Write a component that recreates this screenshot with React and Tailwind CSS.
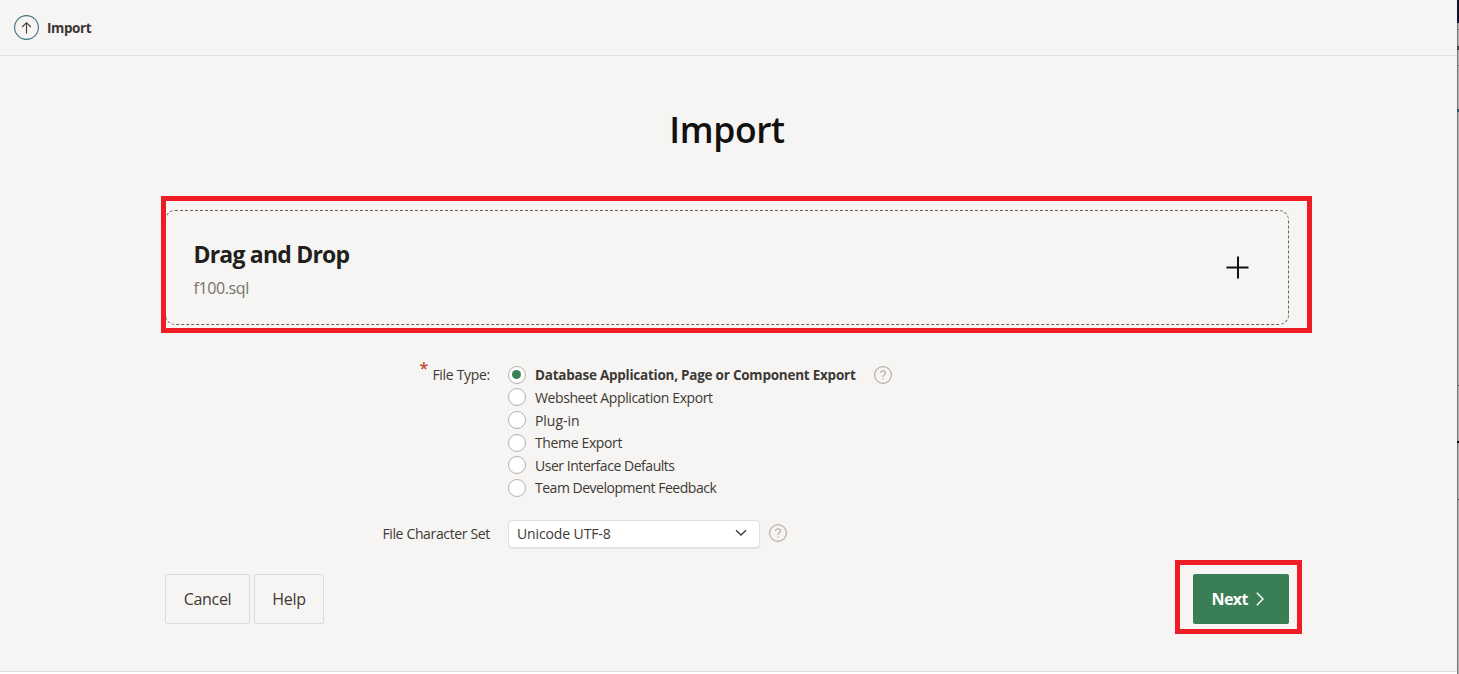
const fileTypes = [
  { label: 'Database Application, Page or Component Export', style: 'text-[13.5px] font-bold tracking-[-0.24px]' },
  { label: 'Websheet Application Export', style: 'tracking-[-0.4px]' },
  { label: 'Plug-in', style: 'tracking-[-0.05px]' },
  { label: 'Theme Export', style: 'tracking-[-0.36px]' },
  { label: 'User Interface Defaults', style: 'tracking-[-0.46px]' },
  { label: 'Team Development Feedback', style: 'tracking-[-0.48px]' },
];

function HelpIcon() {
  return (
    <svg className="size-[18px] shrink-0" viewBox="0 0 18 18" fill="none" stroke="#b3afac">
      <circle cx="9" cy="9" r="8.4" strokeWidth="1.2" />
      <path d="M6.5 7.1C6.5 5.6 7.5 4.8 9 4.8s2.5.9 2.5 2.2c0 1.7-2.4 1.7-2.4 3.6v.5M9.1 12.3v1.3" strokeWidth="1.2" />
    </svg>
  );
}

function Header() {
  return (
    <header className="flex h-14 shrink-0 items-center border-b border-[#e2e1df] pl-3.5">
      <svg className="size-[25px]" viewBox="0 0 25 25" fill="none">
        <circle cx="12.5" cy="12.5" r="11.9" stroke="#3c7480" strokeWidth="1.1" />
        <path d="M12.5 18.5V8M8.2 12l4.3-4.3 4.3 4.3" stroke="#3f3b38" strokeWidth="1.1" />
      </svg>
      <span className="ml-2 text-[13.5px] leading-5 font-bold tracking-[-0.4px] text-[#3a3633]">Import</span>
    </header>
  );
}

function EdgeStrip() {
  return (
    <div className="flex w-0.5 shrink-0 flex-col border-l border-[#777] bg-[#b4b4b4]">
      <div className="-ml-px h-[23px] bg-[#10122a]" />
      <div className="mt-1.5 h-px bg-[#777]" />
      <div className="-ml-px mt-4 h-1 bg-[#444]" />
      <div className="mt-[15px] h-px bg-[#777]" />
      <div className="-ml-px mt-[43px] h-[3px] bg-[#35525c]" />
      <div className="mt-[273px] h-px bg-[#444]" />
      <div className="-ml-px mt-[55px] h-0.5 bg-black" />
      <div className="mt-14 h-px bg-[#444]" />
    </div>
  );
}

export default function App() {
  return (
    <div className="flex h-[674px] w-[1459px] overflow-hidden bg-white font-['Open_Sans','Noto_Sans',sans-serif] text-[#3d3935]">
      <div className="flex flex-1 flex-col bg-white">
        <div className="flex h-[672px] flex-col border-b border-[#dfdedc] bg-[#f6f5f3]">
          <Header />
          <main className="flex flex-col pr-[168px] pl-[165px]">
            <h1 className="mt-12 h-[50px] text-center text-[35.5px] leading-[50px] font-semibold tracking-[-0.4px] text-[#121110]">
              Import
            </h1>
            <section className="relative mt-14 flex h-[115px] items-center justify-between rounded-[10px] border border-dashed border-[#66625f] pr-[39px] pl-[27.5px]">
              <div className="pt-1">
                <h2 className="text-[23px] leading-8 font-bold tracking-[-0.8px] text-[#211f1c]">Drag and Drop</h2>
                <p className="mt-[5px] text-[16px] leading-[26px] tracking-[-0.4px] text-[#76716d]">f100.sql</p>
              </div>
              <svg className="size-[23px]" viewBox="0 0 23 23" stroke="#121110" strokeWidth="2">
                <path d="M.5 11.5h22M12 .5v22" />
              </svg>
              <div className="pointer-events-none absolute -top-[15px] -left-[5px] h-[137px] w-[1151px] border-[5px] border-[#ee1c25]" />
            </section>
            <form className="mt-[38.6px] text-[14px]">
              <div className="flex">
                <div className="relative w-[325px] text-right leading-[22px] tracking-[-0.3px]">
                  <span className="absolute -top-[7px] right-[62px] text-[16px] font-semibold text-[#c74634]">*</span>
                  File Type:
                </div>
                <div className="ml-[18px] flex flex-col">
                  {fileTypes.map(({ label, style }, i) => (
                    <label key={label} className="flex h-[22.6px] items-center whitespace-nowrap">
                      <span className="flex size-[18px] shrink-0 items-center rounded-full border border-[#b5b1ae] bg-white pl-[3px]">
                        {i === 0 && <span className="mb-px size-[9px] rounded-full bg-[#3a7e55]" />}
                      </span>
                      <span className={`ml-[9px] ${style}`}>{label}</span>
                      {i === 0 && <span className="ml-[18px]"><HelpIcon /></span>}
                    </label>
                  ))}
                </div>
              </div>
              <div className="mt-[20.4px] flex h-7 items-center">
                <span className="w-[325px] text-right tracking-[-0.35px]">File Character Set</span>
                <div className="ml-[18px] flex h-7 w-[252px] items-center justify-between rounded-sm border border-[#e2e0de] bg-white pr-3 pl-2 shadow-[0_1px_1px_rgba(0,0,0,0.07)]">
                  <span className="tracking-[-0.12px]">Unicode UTF-8</span>
                  <svg className="mb-0.5 h-2 w-3" viewBox="0 0 12 8" fill="none" stroke="#3d3935" strokeWidth="1.3">
                    <path d="m1 1.2 5 4.8 5-4.8" />
                  </svg>
                </div>
                <span className="mb-0.5 ml-[9px]"><HelpIcon /></span>
              </div>
            </form>
            <div className="mt-[26px] flex justify-between text-[16px]">
              <div className="flex gap-1">
                <button className="h-[50px] w-[85px] rounded-[2px] border border-[#dddbd9] tracking-[-0.3px]">Cancel</button>
                <button className="h-[50px] w-[70px] rounded-[2px] border border-[#dddbd9] tracking-[-0.3px]">Help</button>
              </div>
              <div className="relative">
                <button className="flex h-[50px] w-24 items-center rounded-[2px] bg-[#3a7e55] pl-[18.5px] font-bold tracking-[-0.55px] text-white">
                  Next
                  <svg className="ml-2 h-3.5 w-2" viewBox="0 0 8 14" fill="none" stroke="currentColor" strokeWidth="1.4">
                    <path d="m.8.8 6.2 6.2-6.2 6.2" />
                  </svg>
                </button>
                <div className="pointer-events-none absolute -top-[14px] -left-[18px] h-[74px] w-[127px] border-[5px] border-[#ee1c25]" />
              </div>
            </div>
          </main>
        </div>
      </div>
      <EdgeStrip />
    </div>
  );
}
